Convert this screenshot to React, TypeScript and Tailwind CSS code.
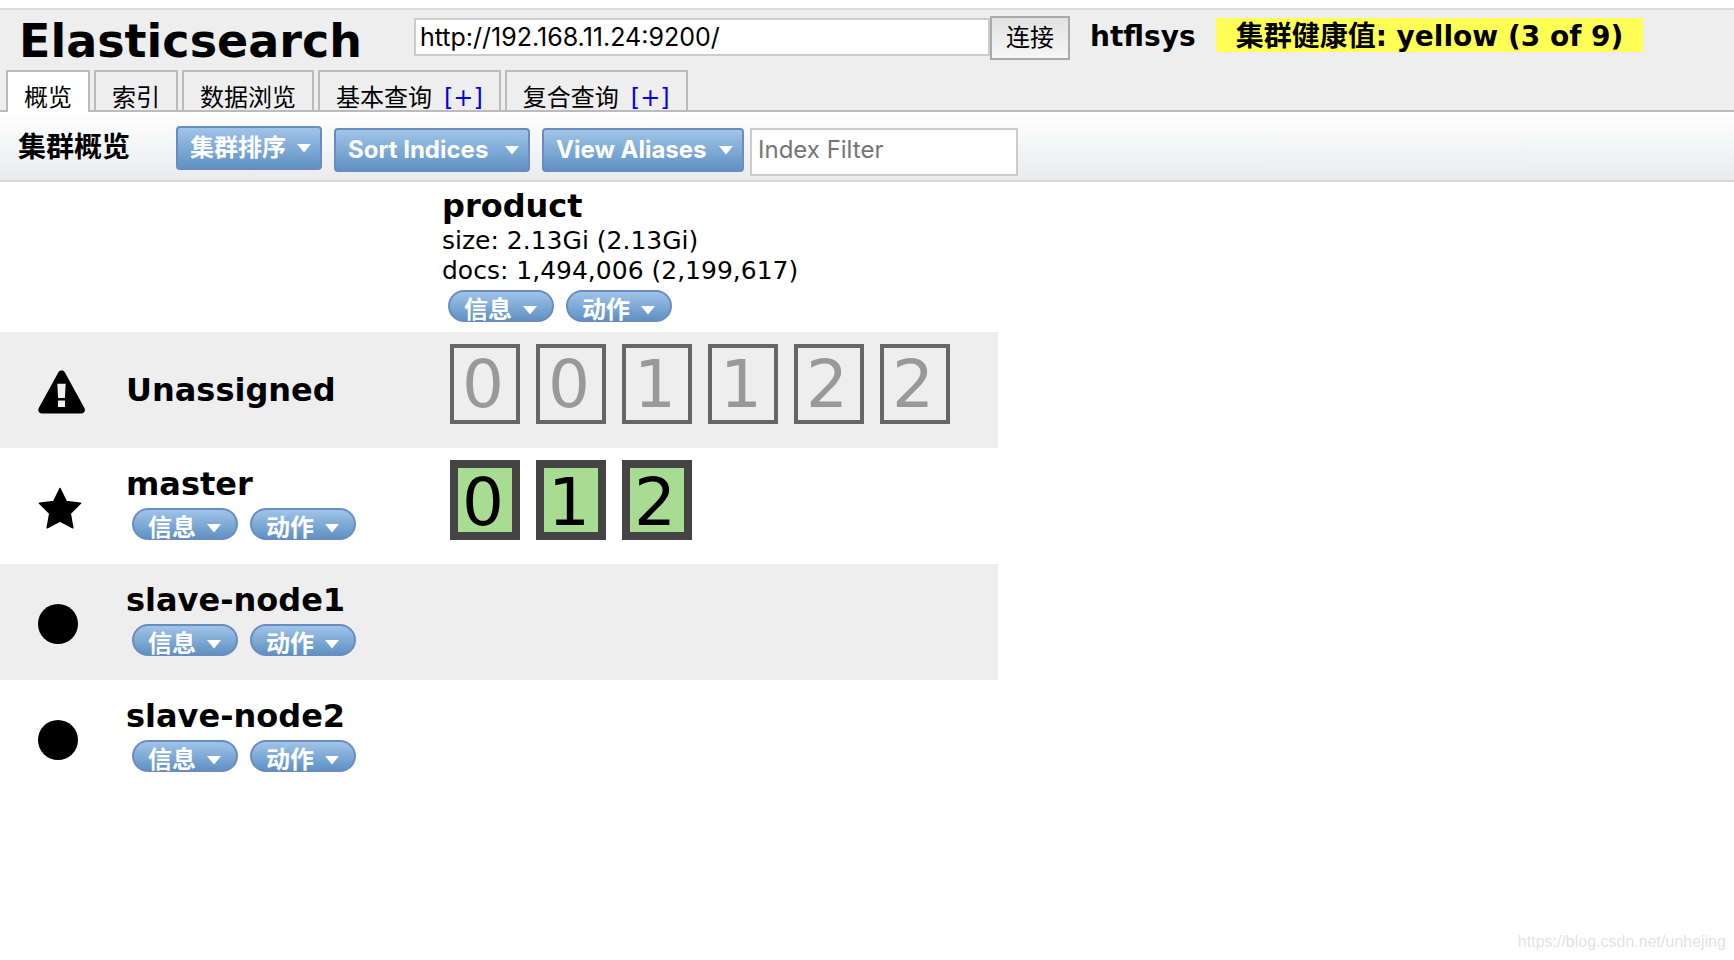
import React from 'react'
import clsx from 'clsx'

const tabs = [
  { label: '概览', active: true },
  { label: '索引' },
  { label: '数据浏览' },
  { label: '基本查询', add: true },
  { label: '复合查询', add: true },
]

const nodes = [
  { name: 'Unassigned', icon: WarningIcon, shards: [0, 0, 1, 1, 2, 2], unassigned: true },
  { name: 'master', icon: StarIcon, shards: [0, 1, 2] },
  { name: 'slave-node1', icon: CircleIcon, shards: [] },
  { name: 'slave-node2', icon: CircleIcon, shards: [] },
]

function WarningIcon() {
  return (
    <svg className="w-12 h-11" viewBox="0 0 48 44" aria-hidden="true">
      <path
        fillRule="evenodd"
        d="M20.4 2.2C21.6-.2 25.6-.2 26.8 2.2L46.4 38c1.4 2.600-.3 5.500-3.200 5.500H4c-2.900 0-4.600-2.900-3.200-5.500ZM19.300 13.700l.8 14.200h6.800l.8-14.200ZM20 30.500v6.600h7v-6.600Z"
      />
    </svg>
  )
}

function StarIcon() {
  return (
    <svg className="w-11 h-[42px]" viewBox="0 0 44 42" aria-hidden="true">
      <path
        stroke="black"
        strokeWidth="1.500"
        strokeLinejoin="round"
        d="M22 1.500 28.200 14.400 42.500 16.300 32.200 26.500 34.800 40.800 22 34 9.200 40.800 11.800 26.500 1.500 16.300 15.800 14.400Z"
      />
    </svg>
  )
}

function CircleIcon() {
  return (
    <svg className="w-10 h-10" viewBox="0 0 40 40" aria-hidden="true">
      <circle cx="20" cy="20" r="20" />
    </svg>
  )
}

function Caret() {
  return (
    <svg className="w-4 h-3 shrink-0" viewBox="0 0 16 12" fill="white" aria-hidden="true">
      <path d="M1 2h14L8 10.500Z" />
    </svg>
  )
}

function MenuButton({ label, className }: { label: string; className?: string }) {
  return (
    <button
      type="button"
      className={clsx(
        'flex items-center justify-between h-11 pl-3 pr-2 gap-2.5 rounded-sm border-2 border-[#6b8cc0] bg-linear-to-b from-[#a0c4e9] to-[#5f92c3]',
        "font-['Inter','Noto_Sans_CJK_SC',sans-serif] text-2xl font-bold text-white whitespace-nowrap",
        className
      )}
    >
      {label}
      <Caret />
    </button>
  )
}

function PillButton({ label }: { label: string }) {
  return (
    <button
      type="button"
      className="flex items-center h-8 px-3.5 pt-2 gap-2.5 rounded-full border-2 border-[#6b8cc0] bg-linear-to-b from-[#a0c4e9] to-[#5f92c3] text-2xl leading-7 font-bold text-white whitespace-nowrap"
    >
      {label}
      <Caret />
    </button>
  )
}

function PillMenu() {
  return (
    <div className="flex gap-3 pl-1.5">
      <PillButton label="信息" />
      <PillButton label="动作" />
    </div>
  )
}

function Shard({ id, unassigned }: { id: number; unassigned?: boolean }) {
  return (
    <div
      className={clsx(
        'flex items-center justify-center w-[70px] h-20 pr-1 text-[66px] leading-none',
        unassigned
          ? 'border-4 border-[#666] pt-0.5 text-[#999]'
          : 'border-8 border-[#444] bg-[#a8dc92] pt-1.5 text-black'
      )}
    >
      {id}
    </div>
  )
}

export default function App() {
  return (
    <div className="min-h-screen bg-white pt-2 text-black font-['DejaVu_Sans','Noto_Sans_CJK_SC',sans-serif]">
      {/* Connection bar */}
      <header className="border-t-2 border-[#d9d9de] bg-[#eee]">
        <div className="flex items-start h-[60px] pt-1.5">
          <h1 className="w-[414px] shrink-0 pl-[19px] text-[46px] leading-[50px] font-bold">Elasticsearch</h1>
          <form className="flex items-start">
            <input
              type="text"
              aria-label="Cluster URL"
              defaultValue="http://192.168.11.24:9200/"
              className="w-[576px] h-[38px] mt-0.5 px-1 border-2 border-[#ccc] bg-white font-['Inter',sans-serif] text-[25px]"
            />
            <button
              type="button"
              className="w-20 h-11 border-2 border-[#aaa] bg-linear-to-b from-[#e2e2e2] to-[#f6f6f6] text-2xl leading-8"
            >
              连接
            </button>
          </form>
          <div className="flex items-start ml-5 mt-0.5 gap-5 text-[28px] leading-[30px] font-bold whitespace-nowrap">
            <span className="pt-1">htflsys</span>
            <span className="px-5 pt-1 bg-[#ffff55]">集群健康值: yellow (3 of 9)</span>
          </div>
        </div>

        <nav className="flex gap-1 px-1.5 border-b-2 border-[#bbb]">
          {tabs.map((tab) => (
            <div
              key={tab.label}
              className={clsx(
                'flex items-start h-[42px] -mb-0.5 px-4 pt-2.5 gap-3 border-2 border-b-0 border-[#bbb] text-2xl leading-8',
                tab.active && 'bg-white'
              )}
            >
              <a href="#">{tab.label}</a>
              {tab.add && (
                <a href="#" className="text-[#0000ee]">
                  [+]
                </a>
              )}
            </div>
          ))}
        </nav>
      </header>

      {/* Overview toolbar */}
      <div className="flex items-start h-[70px] pt-4 pl-[18px] border-b-2 border-[#d4d6d6] bg-linear-to-b from-white to-[#e9ebed]">
        <h2 className="w-[158px] text-[28px] leading-10 font-bold">集群概览</h2>
        <div className="flex items-start gap-3">
          <MenuButton label="集群排序" className="-mt-0.5" />
          <MenuButton label="Sort Indices" className="w-[196px]" />
          <MenuButton label="View Aliases" className="w-[202px]" />
        </div>
        <input
          type="text"
          aria-label="Index Filter"
          placeholder="Index Filter"
          className="w-[268px] h-12 ml-1.5 px-1.5 pb-1.5 border-2 border-[#ccc] bg-white font-['Inter',sans-serif] text-2xl placeholder:text-[#757575]"
        />
      </div>

      {/* Cluster */}
      <table className="border-collapse">
        <thead>
          <tr className="h-[150px] align-top">
            <td className="w-[126px]" />
            <td className="w-[316px]" />
            <th scope="col" className="w-[556px] text-left font-normal">
              <div className="pt-1 text-[32px] leading-10 font-bold">product</div>
              <div className="text-[25px] leading-[30px]">size: 2.13Gi (2.13Gi)</div>
              <div className="mb-1 text-[25px] leading-[30px]">docs: 1,494,006 (2,199,617)</div>
              <PillMenu />
            </th>
          </tr>
        </thead>
        <tbody>
          {nodes.map((node) => {
            const NodeIcon = node.icon

            return (
              <tr key={node.name} className="h-[116px] odd:bg-[#eee]">
                <td className="pl-[38px] pt-1">
                  <NodeIcon />
                </td>
                <th scope="row" className="text-left font-normal">
                  <div className="text-[32px] leading-9 font-bold">{node.name}</div>
                  {!node.unassigned && (
                    <div className="pt-1.5 pb-1.5">
                      <PillMenu />
                    </div>
                  )}
                </th>
                <td className="pt-3 align-top">
                  <div className="flex gap-4 pl-2">
                    {node.shards.map((id, index) => (
                      <Shard key={index} id={id} unassigned={node.unassigned} />
                    ))}
                  </div>
                </td>
              </tr>
            )
          })}
        </tbody>
      </table>

      <a
        href="https://blog.csdn.net/unhejing"
        className="fixed right-2 bottom-2 font-['Liberation_Sans',sans-serif] text-base leading-5 text-[#e2e2e2]"
      >
        https://blog.csdn.net/unhejing
      </a>
    </div>
  )
}
